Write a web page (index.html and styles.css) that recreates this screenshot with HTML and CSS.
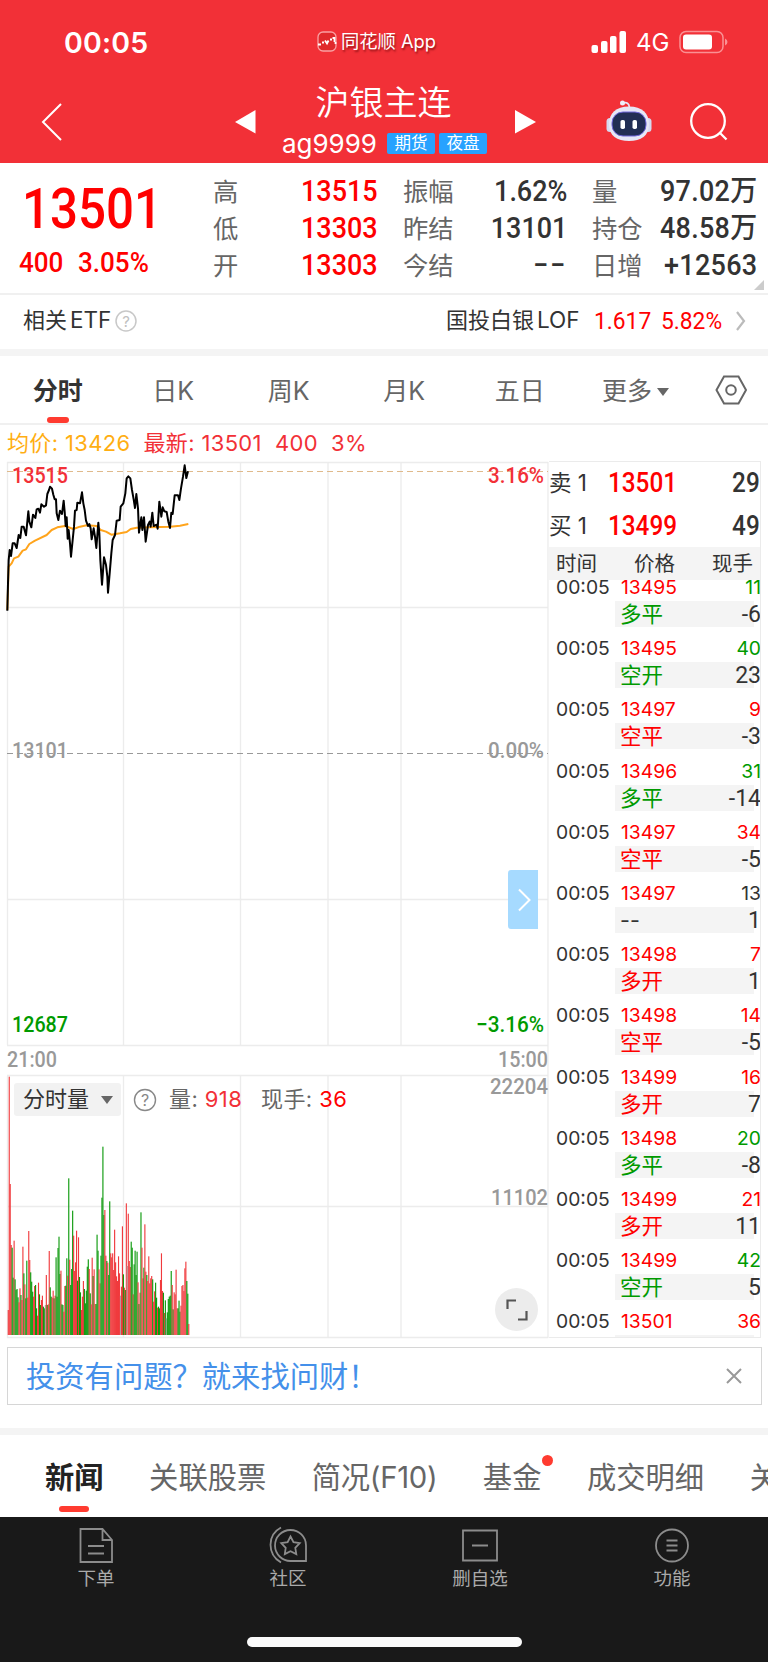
FILE: index.html
```html
<!DOCTYPE html>
<html lang="zh-CN">
<head>
    <meta charset="UTF-8">
    <title>沪银主连 ag9999</title>
    <link rel="stylesheet" href="styles.css">
</head>
<body>
    <header class="header">
        <!-- 状态栏 -->
        <div class="status-bar">
            <div class="clock">00:05</div>
            <div class="app-name">
                <svg width="20" height="21" viewBox="0 0 20 21">
                    <rect x="1" y="1" width="18" height="19" rx="5" fill="#e0292c" stroke="#f9a0a2" stroke-width="1.3"/>
                    <path d="M1 13.500h3M5 11.500h2M8 9.500l2 3 1.500-3M13 8.500h2M15.500 7h2v4M18.500 11v2" fill="none" stroke="#fff" stroke-width="1.800"/>
                </svg>
                <span>同花顺 App</span>
            </div>
            <div class="signal">
                <svg width="36" height="22" viewBox="0 0 36 22" fill="#fff">
                    <rect x="0.5" y="14" width="6.5" height="8" rx="2"/>
                    <rect x="10" y="10" width="6.5" height="12" rx="2"/>
                    <rect x="19" y="5" width="6.5" height="17" rx="2"/>
                    <rect x="28.5" y="0" width="6.5" height="22" rx="2"/>
                </svg>
                <span>4G</span>
                <svg width="50" height="24" viewBox="0 0 50 24">
                    <rect x="1" y="1.5" width="43" height="21" rx="6" fill="none" stroke="#fa9194" stroke-width="1.5"/>
                    <rect x="4" y="4.5" width="29" height="15" rx="3" fill="#fff"/>
                    <path d="M46 8.5q2.5 1 2.500 3.500t-2.500 3.500z" fill="#fa9194"/>
                </svg>
            </div>
        </div>
        <!-- 标题栏 -->
        <div class="nav">
            <svg class="back" width="22" height="38" viewBox="0 0 22 38"><path d="M20 1L2 19l18 18" fill="none" stroke="#fff" stroke-width="2"/></svg>
            <svg class="prev" width="21" height="24" viewBox="0 0 21 24"><path d="M20.500 0v23.500L0 12z" fill="#fff"/></svg>
            <div class="title">
                <div class="name">沪银主连</div>
                <div class="code">
                    <span>ag9999</span>
                    <i class="tag">期货</i>
                    <i class="tag">夜盘</i>
                </div>
            </div>
            <svg class="next" width="21" height="24" viewBox="0 0 21 24"><path d="M0 0v23.500L21 12z" fill="#fff"/></svg>
            <svg class="robot" width="46" height="42" viewBox="0 0 46 42">
                <path d="M16 3.500c5-2 7 0 7.500 4" fill="none" stroke="#e7e6f8" stroke-width="1.700"/>
                <circle cx="16.500" cy="3" r="2.500" fill="#eeeefa"/>
                <rect x="0.500" y="18" width="7" height="14" rx="3.500" fill="#d6d9f0"/>
                <rect x="38.500" y="18" width="7" height="14" rx="3.500" fill="#d6d9f0"/>
                <path d="M23 6.500c13 0 20 7 20 17.500 0 12-8 17-20 17S3 36 3 24C3 13.500 10 6.500 23 6.500z" fill="#e6e7f6"/>
                <rect x="6" y="12" width="34" height="24" rx="11" fill="#222e54" stroke="#7168dc" stroke-width="1"/>
                <rect x="14.500" y="20" width="4.500" height="9" rx="1.800" fill="#fff"/>
                <rect x="26.500" y="20" width="4.500" height="9" rx="1.800" fill="#fff"/>
            </svg>
            <svg class="search" width="38" height="38" viewBox="0 0 38 38" fill="none" stroke="#fff" stroke-width="2.300">
                <circle cx="18" cy="18" r="16.800"/><path d="M29.500 29.500l7 7"/>
            </svg>
        </div>
    </header>

    <!-- 行情概要 -->
    <section class="quote">
        <div class="quote-main">
            <div class="price din">13501</div>
            <div class="change"><span class="din">400</span><span class="din">3.05%</span></div>
        </div>
        <dl class="col col-a red">
            <dt>高</dt><dd class="din">13515</dd>
            <dt>低</dt><dd class="din">13303</dd>
            <dt>开</dt><dd class="din">13303</dd>
        </dl>
        <dl class="col col-b">
            <dt>振幅</dt><dd class="din">1.62%</dd>
            <dt>昨结</dt><dd class="din">13101</dd>
            <dt>今结</dt><dd class="din dash">−−</dd>
        </dl>
        <dl class="col col-c">
            <dt>量</dt><dd class="din">97.02万</dd>
            <dt>持仓</dt><dd class="din">48.58万</dd>
            <dt>日增</dt><dd class="din">+12563</dd>
        </dl>
        <i class="corner"></i>
    </section>

    <section class="etf">
        <span class="etf-label">相关<b>ETF</b></span>
        <svg width="22" height="22" viewBox="0 0 22 22"><circle cx="11" cy="11" r="10" fill="none" stroke="#c8c8c8" stroke-width="1.500"/><text x="11" y="16.500" text-anchor="middle" class="q-light">?</text></svg>
        <span class="etf-name">国投白银<b>LOF</b></span>
        <span class="etf-num din">1.617</span>
        <span class="etf-pct din">5.82%</span>
        <svg class="arrow" width="11" height="20" viewBox="0 0 11 20"><path d="M2 1l7 9-7 9" fill="none" stroke="#bbb" stroke-width="2.200"/></svg>
    </section>

    <!-- 周期切换 -->
    <nav class="period">
        <a class="active">分时</a>
        <a>日K</a>
        <a>周K</a>
        <a>月K</a>
        <a>五日</a>
        <a class="more">更多<i class="caret"></i></a>
        <svg width="32" height="30" viewBox="0 0 32 30" fill="none" stroke="#666" stroke-width="2"><path d="M9 1.500h14.500L31 15l-7.500 13.500H9L1.500 15z"/><circle cx="16" cy="15" r="4.800"/></svg>
    </nav>

    <div class="summary">
        <span class="avg">均价: 13426</span><span>最新: 13501</span><span>400</span><span>3%</span>
    </div>

    <main class="market">
        <div class="charts">
            <svg class="chart" width="549" height="877" viewBox="0 461 549 877">
                <g class="grid">
                    <path d="M7 462.500H548M7 607.500H548M7 899.500H548M7 1045.500H548M7 1075.500H548M7 1206.500H548M7 1337.500H548"/>
                    <path d="M7.500 462V1045M123.500 462V1045M240.500 462V1045M328 462V1045M401 462V1045M7.500 1076V1338M123.500 1076V1338M240.500 1076V1338M328 1076V1338M401 1076V1338"/>
                    <path d="M548 462V1338" stroke-width="2"/>
                </g>
                <path d="M7 471.500H548" stroke="#dfba8c" stroke-dasharray="6 4"/>
                <path d="M7 753.500H548" stroke="#999" stroke-dasharray="6 4"/>
                <g transform="translate(0 450) scale(.33333)" fill="none" stroke-linejoin="round">
                    <polyline stroke="#ffa41c" stroke-width="6" points="22,480 26,350 35,340 42,325 55,320 68,302 78,298 88,282 105,272 140,255 155,240 172,232 195,228 220,237 240,230 260,226 290,228 302,240 318,245 334,254 360,250 380,246 392,237 410,233 450,232 510,230 540,227 565,222"/>
                    <polyline stroke="#000" stroke-width="6" points="22,482 24,400 26,330 29,300 33,318 38,280 44,280 50,294 56,255 61,264 65,230 71,230 78,256 85,184 88,215 94,232 99,194 106,204 110,178 115,176 120,188 124,163 132,170 138,166 142,132 147,120 150,110 156,116 160,134 164,148 168,148 170,190 175,210 180,182 186,192 191,152 194,185 197,228 200,202 203,266 206,240 210,280 213,320 218,270 222,230 225,182 230,180 232,158 240,160 246,127 250,160 254,180 258,212 264,228 268,222 272,235 275,268 281,235 285,260 289,294 295,218 298,250 301,330 306,404 312,322 318,345 322,380 324,428 329,370 334,310 338,270 345,255 350,212 359,210 362,170 370,160 376,130 380,85 385,79 391,85 396,120 401,148 405,174 409,132 414,175 417,248 424,202 427,240 432,202 437,275 444,225 449,215 452,230 457,188 461,228 470,224 473,236 478,155 484,200 488,172 493,184 500,186 505,215 510,234 514,188 518,192 524,136 534,136 538,150 543,115 549,80 554,46 559,84 564,64"/>
                </g>
                <g class="axis">
                    <text x="12" y="483" textLength="56" lengthAdjust="spacingAndGlyphs" class="up">13515</text>
                    <text x="488" y="483" textLength="56" lengthAdjust="spacingAndGlyphs" class="up">3.16%</text>
                    <text x="12" y="758" textLength="56" lengthAdjust="spacingAndGlyphs">13101</text>
                    <text x="488" y="758" textLength="56" lengthAdjust="spacingAndGlyphs">0.00%</text>
                    <text x="12" y="1032" textLength="56" lengthAdjust="spacingAndGlyphs" class="down">12687</text>
                    <text x="476" y="1032" textLength="68" lengthAdjust="spacingAndGlyphs" class="down">−3.16%</text>
                    <text x="7" y="1067" textLength="50" lengthAdjust="spacingAndGlyphs">21:00</text>
                    <text x="498" y="1067" textLength="50" lengthAdjust="spacingAndGlyphs">15:00</text>
                    <text x="490" y="1094" textLength="58" lengthAdjust="spacingAndGlyphs">22204</text>
                    <text x="491" y="1205" textLength="57" lengthAdjust="spacingAndGlyphs">11102</text>
                </g>
                <g id="volume"></g>
            </svg>
            <div class="vol-head">
                <span class="vol-select">分时量<i class="caret"></i></span>
                <svg width="24" height="24" viewBox="0 0 24 24"><circle cx="12" cy="12" r="10.500" fill="none" stroke="#888" stroke-width="1.400"/><text x="12" y="18" text-anchor="middle" class="q-dark">?</text></svg>
                <span class="vol-a">量: <em>918</em></span>
                <span class="vol-b">现手: <em class="hot">36</em></span>
            </div>
            <div class="side-btn"><svg width="14" height="24" viewBox="0 0 14 24"><path d="M2 1.500L12.500 12 2 22.500" fill="none" stroke="#fff" stroke-width="2"/></svg></div>
            <div class="full-btn"><svg width="22" height="22" viewBox="0 0 22 22"><path d="M1.500 10V1.500H10M20.500 12v8.500H12" fill="none" stroke="#555" stroke-width="2.200"/></svg></div>
        </div>

        <!-- 盘口与成交明细 -->
        <aside class="book">
            <div class="level"><span>卖 1</span><b class="din">13501</b><strong class="din">29</strong></div>
            <div class="level"><span>买 1</span><b class="din">13499</b><strong class="din">49</strong></div>
            <div class="book-head"><span>时间</span><span>价格</span><span>现手</span></div>
            <div class="ticks" id="ticks"></div>
        </aside>
    </main>

    <div class="ask">
        <span>投资有问题？就来找问财！</span>
        <svg width="16" height="16" viewBox="0 0 16 16"><path d="M1 1l14 14M15 1L1 15" stroke="#999" stroke-width="2"/></svg>
    </div>

    <nav class="news-tabs">
        <a class="active">新闻</a>
        <a>关联股票</a>
        <a>简况(F10)</a>
        <a class="dot">基金</a>
        <a>成交明细</a>
        <a>关</a>
    </nav>

    <footer class="footer">
        <div class="tools">
            <a>
                <svg width="38" height="38" viewBox="0 0 38 38"><path d="M3.500 3h22l9.500 11v22H3.500zM25.500 3v11H35M11 20h16M11 27.500h16"/></svg>
                <span>下单</span>
            </a>
            <a>
                <svg width="38" height="38" viewBox="0 0 38 38"><path d="M12 1.500C-2 9-2 28 12 36.500M37 35H22A15.500 15.500 0 1 1 37 19.500zM21.500 10.500l3 5.700 6.200 1-4.400 4.600 1 6.300-5.800-2.800-5.700 2.800.9-6.300-4.400-4.600 6.300-1z"/></svg>
                <span>社区</span>
            </a>
            <a>
                <svg width="38" height="38" viewBox="0 0 38 38"><path d="M2 4.500h34v30H2zM11 19.500h16"/></svg>
                <span>删自选</span>
            </a>
            <a>
                <svg width="38" height="38" viewBox="0 0 38 38"><circle cx="19" cy="19.500" r="16"/><path d="M13.500 14.500h11M13.500 19.500h11M13.500 24.500h11"/></svg>
                <span>功能</span>
            </a>
        </div>
        <div class="home-bar"></div>
    </footer>

    <script src="script.js"></script>
</body>
</html>
```

FILE: styles.css
```css
* {
    box-sizing: border-box;
}
body {
    margin: 0;
    width: 768px;
    height: 1663px;
    overflow: hidden;
    background: #fff;
    color: #333;
    font-family: Inter, "Noto Sans CJK SC", sans-serif;
}
svg {
    display: block;
    flex: none;
}
i, em {
    font-style: normal;
}
/* 窄体数字 */
.din {
    font-family: Roboto, "Noto Sans CJK SC", sans-serif;
    font-weight: 500;
    white-space: nowrap;
    transform: scaleX(0.93);
    transform-origin: right center;
}

/* 顶部 */
.header {
    height: 163px;
    background: #f23037;
    color: #fff;
}
.status-bar {
    display: flex;
    align-items: center;
    height: 84px;
    padding-left: 64px;
}
.clock {
    width: 253px;
    font-size: 28.5px;
    font-weight: 600;
    letter-spacing: 0.2px;
}
.app-name {
    display: flex;
    align-items: center;
    gap: 4px;
    width: 274px;
    margin-top: -2px;
    font-size: 18.3px;
    line-height: 24px;
    text-shadow: 1px 2px 2px rgba(90, 0, 0, 0.6);
    white-space: nowrap;
}
.signal {
    display: flex;
    align-items: center;
    font-size: 24px;
}
.signal span {
    width: 43px;
    margin-left: 9px;
}
.nav {
    display: flex;
    height: 79px;
}
.back {
    margin: 19px 0 0 41px;
}
.prev {
    margin: 26px 0 0 172px;
}
.title {
    width: 259px;
    text-align: center;
}
.name {
    margin: -1px 4px 0 0;
    font-size: 34px;
    line-height: 40px;
    font-weight: 350;
}
.code {
    display: flex;
    align-items: center;
    justify-content: flex-end;
    padding-right: 28px;
    height: 38px;
    margin-top: 1px;
    font-size: 26px;
    gap: 4px;
}
.code span {
    margin-right: 6px;
}
.tag {
    width: 48px;
    height: 21px;
    border-radius: 2px;
    background: #27a2ff;
    font-size: 16.5px;
    line-height: 20px;
}
.next {
    margin: 26px 0 0 0;
}
.robot {
    margin: 16px 0 0 70px;
}
.search {
    margin: 19px 0 0 38px;
}

/* 行情 */
.quote {
    position: relative;
    display: flex;
    height: 132px;
    padding-top: 10px;
    border-bottom: 2px solid #f0f0f0;
}
.quote-main {
    width: 213px;
    color: #f00;
}
.price {
    margin: 11px 0 0 22px;
    font-size: 56px;
    line-height: 50px;
    transform: scaleX(0.88);
    transform-origin: left center;
}
.change {
    display: flex;
    margin: 13px 0 0 19px;
    font-size: 28px;
    line-height: 32px;
}
.change .din {
    width: 59px;
    transform-origin: left center;
}
.col {
    display: grid;
    grid-template-columns: auto 1fr;
    grid-auto-rows: 37px;
    align-items: center;
    margin: 0;
    font-size: 25.3px;
}
.col dt {
    color: #666;
    line-height: 37px;
    white-space: nowrap;
}
.col dd {
    margin: 0;
    font-size: 29px;
    line-height: 37px;
    text-align: right;
}
.col .dash {
    letter-spacing: 2px;
}
.col-a {
    width: 165px;
}
.col-b {
    width: 164px;
    margin-left: 25px;
}
.col-c {
    width: 165px;
    margin-left: 25px;
}
.col-c dd {
    letter-spacing: 0.3px;
}
.red dd {
    color: #f00;
}
.corner {
    position: absolute;
    right: 4px;
    bottom: 3px;
    border-left: 10px solid transparent;
    border-bottom: 10px solid #ccc;
}
.etf {
    display: flex;
    align-items: center;
    height: 54px;
    padding: 0 0 3px 23px;
    font-size: 22px;
    line-height: 26px;
}
.etf b {
    margin-left: 3px;
    font-size: 22.5px;
    font-weight: 400;
}
.etf-label, .etf-name {
    padding-bottom: 2px;
}
.etf-label {
    width: 92px;
}
.etf-name {
    width: 136px;
    margin-left: 309px;
    white-space: nowrap;
}
.etf-num, .etf-pct {
    margin-left: 12px;
    width: 55px;
    padding-top: 1px;
    color: #f00;
    font-size: 24.5px;
    font-weight: 400;
    transform-origin: left center;
}
.q-light, .q-dark {
    font: 15px Inter, sans-serif;
    fill: #c0c0c0;
}
.q-dark {
    font-size: 16px;
    fill: #888;
}
.arrow {
    margin-left: 12px;
}
.etf-num + .etf-pct {
    width: 62px;
}

/* 周期 */
.period {
    display: flex;
    align-items: center;
    height: 76px;
    border-top: 7px solid #f4f4f4;
    border-bottom: 2px solid #f0f0f0;
    color: #666;
    font-size: 25px;
}
.period a {
    position: relative;
    width: 115.5px;
    height: 67px;
    line-height: 70px;
    text-align: center;
}
.period .active {
    color: #333;
    font-weight: 700;
}
.active::after {
    content: "";
    position: absolute;
    left: 50%;
    bottom: 0;
    width: 22px;
    height: 6px;
    margin-left: -11px;
    border-radius: 3px;
    background: #ff3b30;
}
.period .more {
    width: 137px;
    padding-right: 21px;
}
.caret {
    display: inline-block;
    margin-left: 5px;
    border: 6px solid transparent;
    border-top: 8px solid #666;
    border-bottom: 0;
    vertical-align: 4px;
}
.summary {
    display: flex;
    gap: 13px;
    height: 36px;
    padding-left: 7px;
    color: #f23037;
    font-size: 22px;
    letter-spacing: 0.35px;
    line-height: 36px;
    white-space: nowrap;
}
.summary .avg {
    color: #ffae12;
}

/* 走势图 */
.market {
    display: flex;
    height: 877px;
}
.charts {
    position: relative;
    width: 549px;
}
.chart {
    overflow: visible;
}
.grid path {
    stroke: #ececec;
    stroke-width: 1.3;
}
.axis text {
    font: 500 22px Roboto, sans-serif;
    fill: #999;
}
.axis .up {
    fill: #f23037;
}
.axis .down {
    fill: #009a00;
}
.vol-head {
    position: absolute;
    left: 14px;
    top: 622px;
    display: flex;
    align-items: center;
    height: 33px;
    color: #666;
    font-size: 22px;
    line-height: 29px;
    white-space: nowrap;
}
.vol-select {
    width: 107px;
    height: 33px;
    margin-right: 12px;
    padding-left: 9px;
    border-radius: 3px;
    background: #f2f2f2;
    color: #333;
    line-height: 33px;
}
.vol-select .caret {
    margin-left: 12px;
    vertical-align: 3px;
}
.vol-a {
    width: 92px;
    margin-left: 12px;
}
.vol-a, .vol-b {
    letter-spacing: 0.4px;
}
.vol-head em {
    color: #f23037;
}
.vol-head .hot {
    color: #f00;
}
.side-btn, .full-btn {
    position: absolute;
    display: flex;
    align-items: center;
    justify-content: center;
}
.side-btn {
    left: 508px;
    top: 409px;
    width: 30px;
    height: 59px;
    padding-left: 2px;
    border-radius: 3px 0 0 3px;
    background: #a6daff;
}
.full-btn {
    left: 495px;
    top: 827px;
    width: 43px;
    height: 43px;
    border-radius: 50%;
    background: #ececec;
}

/* 盘口 */
.book {
    width: 212px;
    height: 877px;
    border: 1px solid #ebebeb;
    border-width: 1px 1px 1px 0;
    overflow: hidden;
}
.level {
    display: grid;
    grid-template-columns: 59px 1fr auto;
    align-items: center;
    height: 42.5px;
    font-size: 22.5px;
    line-height: 42px;
}
.level .din {
    font-size: 27px;
    transform: scaleX(0.9);
    transform-origin: left center;
}
.level b {
    color: #f00;
}
.level strong.din {
    transform-origin: right center;
}
.book-head {
    display: flex;
    justify-content: space-between;
    height: 33px;
    padding: 0 7px;
    background: #f4f4f4;
    font-size: 20.5px;
    line-height: 33px;
}
.ticks {
    height: 757px;
}
.tick {
    height: 61.2px;
}
.tick:first-child {
    margin-top: -6px;
}
.tick-row {
    display: grid;
    grid-template-columns: 65px 1fr auto;
    height: 27px;
    margin-right: -1px;
    padding-left: 7px;
    font-size: 19.3px;
    line-height: 26px;
}
.tick-kind {
    display: flex;
    justify-content: space-between;
    width: 139px;
    height: 26px;
    margin-left: 66px;
    padding-left: 5px;
    background: #f4f4f4;
    font-size: 21.5px;
    line-height: 26px;
}
.tick-kind b {
    margin-right: -7px;
    font: 400 23px/27px Roboto, sans-serif;
}
.r {
    color: #f00;
}
.g {
    color: #009a00;
}

/* 问财 */
.ask {
    display: flex;
    align-items: center;
    justify-content: space-between;
    height: 58px;
    margin: 9px 6px 23px 7px;
    padding: 0 19px 0 18px;
    border: 1px solid #d6d6d6;
    color: #4490ea;
    font-size: 29.3px;
}
.ask span {
    padding-bottom: 4px;
    font-family: "Noto Sans CJK SC", sans-serif;
    line-height: 50px;
}
.news-tabs {
    display: flex;
    gap: 45.5px;
    height: 89px;
    padding-left: 45px;
    border-top: 7px solid #f4f4f4;
    color: #666;
    font-size: 29.3px;
    line-height: 85px;
    white-space: nowrap;
    overflow: hidden;
}
.news-tabs a {
    position: relative;
}
.news-tabs .active {
    color: #222;
    font-weight: 700;
}
.news-tabs .active::after {
    bottom: 5px;
    width: 30px;
    margin-left: -15px;
}
.news-tabs a:nth-child(3) {
    letter-spacing: -0.3px;
}
.dot::after {
    content: "";
    position: absolute;
    right: -12px;
    top: 20px;
    width: 11px;
    height: 11px;
    border-radius: 50%;
    background: #ff3b30;
}

/* 底部 */
.footer {
    height: 145px;
    background: #191919;
    color: #aaa;
}
.tools {
    display: flex;
    height: 120px;
    padding-top: 9px;
}
.tools a {
    display: flex;
    flex: 1;
    flex-direction: column;
    align-items: center;
    font-size: 18.5px;
    line-height: 28px;
}
.tools svg {
    fill: none;
    stroke: #8c8c8c;
    stroke-width: 1.8;
}
.home-bar {
    width: 275px;
    height: 10px;
    margin: 0 auto;
    border-radius: 5px;
    background: #fafafa;
}
```

FILE: script.js
```js
// 分时量: 高度 + 颜色 (r 涨 / g 跌 / n 平)
const volume = '75r 775r 453r 270r 262g 172g 283r 167g 135g 138g 113g 98r 140r 120g 105r 265r 185g 152r 110g 223g 112r 312r 225r 188g 160g 130g 115r 147r 150g 80g 58r 157r 122g 90g 105r 118r 85g 80g 90n 180r 90g 92r 252r 143g 115g 112r 133r 110g 118r 233g 115g 261g 295g 183g 193r 92g 90g 70r 147r 148g 230g 178r 470g 226r 150g 198g 373g 298r 192r 218r 313r 163g 293r 174g 128g 75r 115r 162r 138g 95g 133g 205g 227g 198r 125g 92r 232r 177g 197r 93r 93g 301g 253g 197r 155r 238g 412g 565g 360g 375r 238r 222g 217r 180g 401g 245r 233r 245r 195r 316r 218r 176r 162r 236r 185r 118n 145r 326r 182g 142r 135g 395r 207n 364r 222r 204r 280g 262g 122r 212g 253g 180g 250g 158r 93g 127r 368g 262r 170r 202g 332r 190r 180g 162r 236r 155r 170r 177r 167g 100r 131r 157g 112g 82r 85g 80g 165r 245r 132r 127g 66r 104g 50n 68g 108g 115g 118g 192g 150r 77g 128r 122r 196r 80r 80g 103g 70g 88r 147r 150r 132r 200r 220r 162g 124g 33r'.split(' ');
const colors = { r: '#f03a3d', g: '#0b990b', n: '#aaa' };
const step = 181.5 / volume.length;
document.getElementById('volume').innerHTML = volume.map((v, i) => {
    const h = parseInt(v) / 3;
    return `<rect x="${(7.7 + i * step).toFixed(2)}" y="${(1335 - h).toFixed(2)}" width="${(step + 0.15).toFixed(2)}" height="${h.toFixed(2)}" fill="${colors[v.slice(-1)]}"/>`;
}).join('');

// 成交明细
const ticks = [
    ['13495', '11', 'g', '多平', 'g', '-6'],
    ['13495', '40', 'g', '空开', 'g', '23'],
    ['13497', '9', 'r', '空平', 'r', '-3'],
    ['13496', '31', 'g', '多平', 'g', '-14'],
    ['13497', '34', 'r', '空平', 'r', '-5'],
    ['13497', '13', '', '--', '', '1'],
    ['13498', '7', 'r', '多开', 'r', '1'],
    ['13498', '14', 'r', '空平', 'r', '-5'],
    ['13499', '16', 'r', '多开', 'r', '7'],
    ['13498', '20', 'g', '多平', 'g', '-8'],
    ['13499', '21', 'r', '多开', 'r', '11'],
    ['13499', '42', 'g', '空开', 'g', '5'],
    ['13501', '36', 'r', '', '', '']
];
document.getElementById('ticks').innerHTML = ticks.map(t => `
    <div class="tick">
        <div class="tick-row"><span>00:05</span><span class="r">${t[0]}</span><span class="${t[2]}">${t[1]}</span></div>
        <div class="tick-kind"><span class="${t[4]}">${t[3]}</span><b>${t[5]}</b></div>
    </div>
`).join('');
```
